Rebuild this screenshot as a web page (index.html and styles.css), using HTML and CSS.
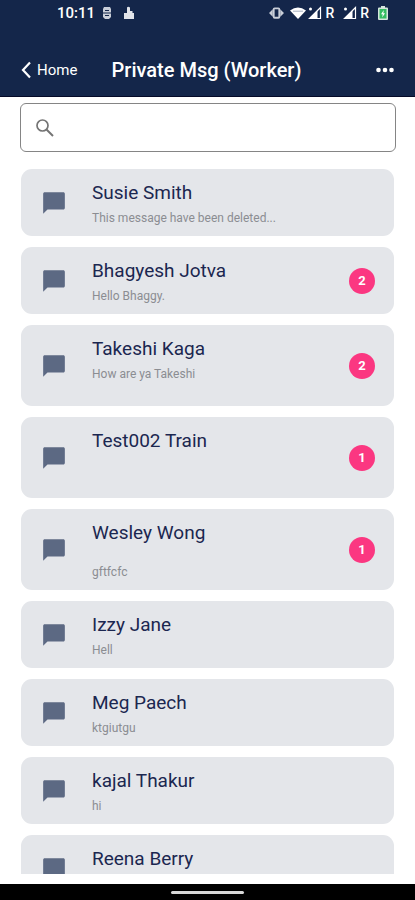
FILE: index.html
```
<!DOCTYPE html>
<html lang="en">
<head>
<meta charset="utf-8">
<meta name="viewport" content="width=device-width, initial-scale=1">
<title>Private Msg (Worker)</title>
<link rel="stylesheet" href="styles.css">
</head>
<body>
<svg class="defs" aria-hidden="true">
  <symbol id="bubble" viewBox="0 0 24 24"><path d="M20.600 2H3.400C2.600 2 2 2.600 2 3.400V22l4-4h14.600c.8 0 1.400-.6 1.400-1.400V3.400C22 2.600 21.400 2 20.600 2z"/></symbol>
  <symbol id="signal" viewBox="0 0 14 14"><path d="M12.500 1.500v11H1.500z" fill="none" stroke="currentColor" stroke-width="1.200"/><path d="M9.500 4.500V13H1z"/><circle cx="2.500" cy="3" r="1.500"/></symbol>
</svg>
<div class="screen">
  <header class="top">
    <div class="status">
      <span class="clock">10:11</span>
      <svg class="s-shield" viewBox="0 0 10 14"><path d="M2 1h6l1 2v8L7 13H3L1 11V3z" fill="#c9ced8"/><path d="M3 4.500h4M1 7h8M3 9.500h4" stroke="#14264a" stroke-width="1.200"/></svg>
      <svg class="s-hand" viewBox="0 0 12 14"><path d="M1 7h3V1.500q1-1.500 3 0V5H9.500v2H11v6H1z" fill="#e2e4e9"/></svg>
      <span class="grow"></span>
      <svg class="s-vibrate" viewBox="0 0 16 12"><path d="M4 2v8L0 6zM12 2v8l4-4z" fill="#c9ced8"/><rect x="5" y="1" width="6" height="10" rx="1" fill="none" stroke="#c9ced8" stroke-width="2"/></svg>
      <svg class="s-wifi" viewBox="0 0 16 12"><path d="M0 3.500Q8-2.500 16 3.500L8 12z" fill="#fff"/><path d="M3 4.200h10" fill="none" stroke="#8f9bb0" stroke-width=".8"/></svg>
      <svg class="s-signal"><use href="#signal"/></svg>
      <span class="roam">R</span>
      <svg class="s-signal"><use href="#signal"/></svg>
      <span class="roam">R</span>
      <svg class="s-battery" viewBox="0 0 10 14"><path d="M3 0h4v1.500h2q1 0 1 1V13q0 1-1 1H1q-1 0-1-1V2.500q0-1 1-1h2z" fill="#d5e5dc"/><rect x="1.500" y="3" width="7" height="9.500" fill="#35bd62"/><path d="M5.800 4L3 8.300h1.700L4.200 11.500 7 7.200H5.300z" fill="#fff"/></svg>
    </div>
    <nav class="bar">
      <a class="back" href="#"><svg viewBox="0 0 10 18"><path d="M9 1.500L2 9l7 7.500" fill="none" stroke="#fff" stroke-width="2.200"/></svg>Home</a>
      <h1>Private Msg (Worker)</h1>
      <button class="more" type="button" aria-label="More"><svg viewBox="0 0 18 6"><circle cx="2.500" cy="3" r="2.300"/><circle cx="9" cy="3" r="2.300"/><circle cx="15.500" cy="3" r="2.300"/></svg></button>
    </nav>
  </header>
  <label class="search">
    <svg viewBox="0 0 18 18"><circle cx="6.500" cy="6.500" r="5.500" fill="none" stroke="#747474" stroke-width="1.700"/><path d="M10.500 10.500l6.500 6.500" stroke="#747474" stroke-width="2"/></svg>
    <input type="search" aria-label="Search">
  </label>
  <ul class="list">
    <li class="card"><svg class="bubble"><use href="#bubble"/></svg><div class="text"><h2>Susie Smith</h2><p>This message have been deleted...</p></div></li>
    <li class="card"><svg class="bubble"><use href="#bubble"/></svg><div class="text"><h2>Bhagyesh Jotva</h2><p>Hello Bhaggy.</p></div><span class="badge">2</span></li>
    <li class="card"><svg class="bubble"><use href="#bubble"/></svg><div class="text tall"><h2>Takeshi Kaga</h2><p>How are ya Takeshi</p></div><span class="badge">2</span></li>
    <li class="card"><svg class="bubble"><use href="#bubble"/></svg><div class="text tall"><h2>Test002 Train</h2></div><span class="badge">1</span></li>
    <li class="card"><svg class="bubble"><use href="#bubble"/></svg><div class="text tall"><h2>Wesley Wong</h2><p><br>gftfcfc</p></div><span class="badge">1</span></li>
    <li class="card"><svg class="bubble"><use href="#bubble"/></svg><div class="text"><h2>Izzy Jane</h2><p>Hell</p></div></li>
    <li class="card"><svg class="bubble"><use href="#bubble"/></svg><div class="text"><h2>Meg Paech</h2><p>ktgiutgu</p></div></li>
    <li class="card"><svg class="bubble"><use href="#bubble"/></svg><div class="text"><h2>kajal Thakur</h2><p>hi</p></div></li>
    <li class="card"><svg class="bubble"><use href="#bubble"/></svg><div class="text"><h2>Reena Berry</h2></div></li>
  </ul>
  <footer class="gesture"><span></span></footer>
</div>
</body>
</html>
```
FILE: styles.css
```
* { box-sizing: border-box; margin: 0; padding: 0; }
body { font-family: Roboto, "Liberation Sans", sans-serif; background: #fff; }
svg { display: block; flex: none; }
.defs { position: absolute; width: 0; height: 0; }
.screen { display: flex; flex-direction: column; height: 100vh; overflow: hidden; }

.top { flex: none; background: #14264a; color: #fff; border-bottom: 1px solid #050a28; }
.status { display: flex; align-items: center; height: 26px; padding: 0 27px 0 57px; }
.clock { font-size: 15px; font-weight: 500; margin-right: 7px; }
.s-shield { width: 10px; height: 14px; margin-right: 11px; }
.s-hand { width: 12px; height: 14px; }
.grow { flex: 1; }
.s-vibrate { width: 15px; height: 12px; margin-right: 6px; }
.s-wifi { width: 16px; height: 12px; margin-right: 2px; }
.s-signal { width: 14px; height: 14px; color: #fff; fill: currentColor; margin-right: 3px; }
.roam { font-size: 14px; font-weight: 500; margin-right: 9px; }
.s-battery { width: 10px; height: 14px; }

.bar { display: grid; grid-template-columns: 1fr auto 1fr; align-items: center; height: 70px; padding: 18px 21px 0 19px; }
.bar h1 { font-size: 20px; line-height: 24px; font-weight: 500; }
.back { display: flex; align-items: center; gap: 6px; color: #fff; font-size: 15px; line-height: 20px; text-decoration: none; }
.back svg { width: 10px; height: 18px; margin-left: 2px; }
.more { justify-self: end; border: 0; background: none; }
.more svg { width: 18px; height: 6px; fill: #fff; }

.search { flex: none; display: flex; align-items: center; gap: 12px; height: 49px; margin: 6px 19px 17px 20px; padding: 0 15px; border: 1px solid #858585; border-radius: 6px; }
.search svg { width: 18px; height: 18px; }
.search input { flex: 1; min-width: 0; border: 0; outline: 0; background: none; font: inherit; font-size: 16px; }

.list { flex: 1; min-height: 0; overflow: hidden; list-style: none; display: flex; flex-direction: column; gap: 11px; padding: 0 21px; margin-bottom: 10px; }
.card { flex: none; display: flex; align-items: center; background: #e4e6ea; border-radius: 11px; padding: 12px 19px 11px 20px; }
.bubble { width: 26px; height: 26px; fill: #5c6983; margin-right: 25px; }
.text { flex: 1; min-height: 44px; }
.tall { min-height: 58px; }
.text h2 { font-size: 19px; line-height: 23px; font-weight: 400; color: #1b2750; margin-bottom: 7px; }
.text p { font-size: 12px; line-height: 14px; color: #8b8d92; }
.badge { width: 26px; height: 26px; border-radius: 50%; background: #fb3781; color: #fff; font-size: 13px; font-weight: 700; line-height: 26px; text-align: center; }

.gesture { flex: none; display: flex; align-items: center; justify-content: center; height: 16px; background: #000; }
.gesture span { width: 73px; height: 3px; border-radius: 2px; background: #d8d8d8; }
```
